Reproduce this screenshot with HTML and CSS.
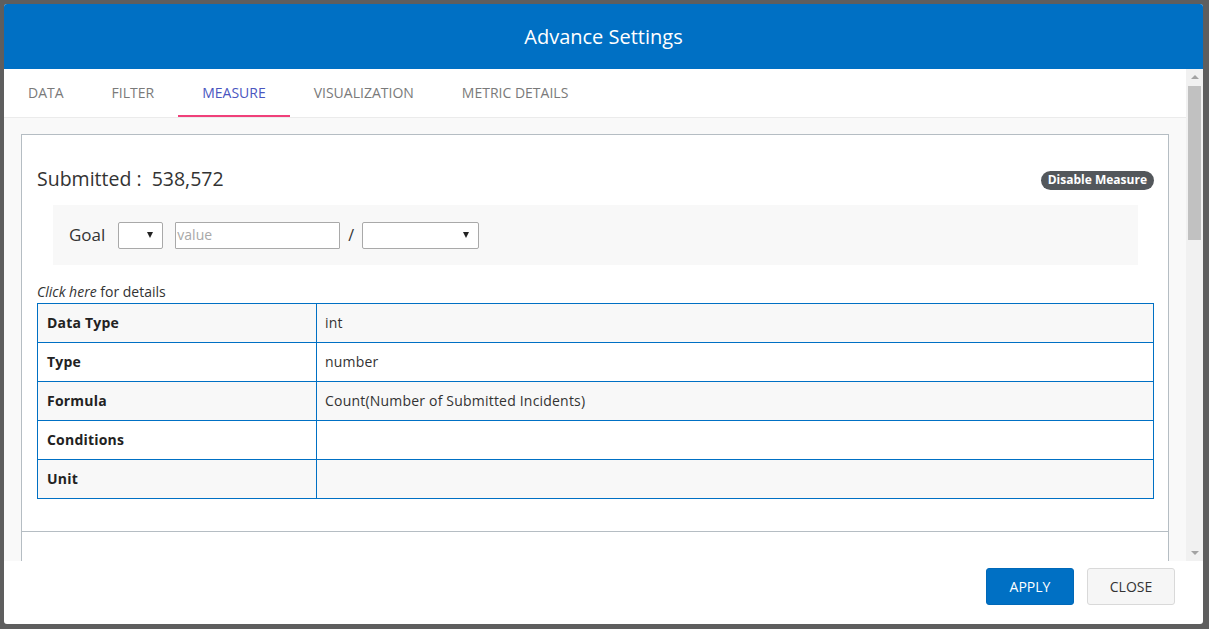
FILE: index.html
```html
<!DOCTYPE html>
<html>
<head>
<meta charset="utf-8">
<link rel="stylesheet" href="styles.css">
</head>
<body>
<div class="modal">
  <div class="modal-header">Advance Settings</div>
  <div class="modal-main">
    <div class="content">
      <div class="tabs">
        <div class="tab">DATA</div>
        <div class="tab">FILTER</div>
        <div class="tab active">MEASURE</div>
        <div class="tab">VISUALIZATION</div>
        <div class="tab">METRIC DETAILS</div>
      </div>
      <div class="tab-pane">
        <div class="panel">
          <div class="panel-body">
            <div class="measure-head">
              <div class="measure-title">Submitted :&nbsp; 538,572</div>
              <span class="badge">Disable Measure</span>
            </div>
            <div class="goal-box">
              <span class="goal-label">Goal</span>
              <div class="select sel-small"><span class="caret"></span></div>
              <input class="goal-input" type="text" placeholder="value">
              <span class="slash">/</span>
              <div class="select sel-wide"><span class="caret"></span></div>
            </div>
            <div class="details-link"><em>Click here</em> for details</div>
            <table class="details">
              <tr class="odd"><th>Data Type</th><td>int</td></tr>
              <tr><th>Type</th><td>number</td></tr>
              <tr class="odd"><th>Formula</th><td>Count(Number of Submitted Incidents)</td></tr>
              <tr><th>Conditions</th><td></td></tr>
              <tr class="odd"><th>Unit</th><td></td></tr>
            </table>
          </div>
          <div class="panel-footer"></div>
        </div>
      </div>
    </div>
    <div class="scrollbar">
      <span class="arrow-up"></span>
      <div class="track"><div class="thumb"></div></div>
      <span class="arrow-down"></span>
    </div>
  </div>
  <div class="modal-footer">
    <button class="btn btn-primary">APPLY</button>
    <button class="btn btn-default">CLOSE</button>
  </div>
</div>
</body>
</html>
```

FILE: styles.css
```css
* { box-sizing: border-box; }

html, body {
  margin: 0;
  height: 629px;
  overflow: hidden;
}

body {
  background: #5e5e5e;
  padding: 4px;
  font-family: "Open Sans", "Noto Sans", sans-serif;
  color: #333;
}

.modal {
  width: 1199px;
  height: 620px;
  background: #fff;
  border-radius: 3px;
  overflow: hidden;
  display: flex;
  flex-direction: column;
}

.modal-header {
  height: 65px;
  flex: none;
  background: #0070c4;
  color: #fff;
  font-size: 20px;
  display: flex;
  align-items: center;
  justify-content: center;
  padding-bottom: 1px;
}

.modal-main {
  height: 492px;
  flex: none;
  display: flex;
}

.content {
  flex: 1;
  overflow: hidden;
  background: #f9f9f9;
}

.tabs {
  height: 49px;
  background: #fff;
  border-bottom: 1px solid #ebebeb;
  display: flex;
}

.tab {
  height: 48px;
  padding: 0 24px;
  display: flex;
  align-items: center;
  font-size: 14px;
  color: #7a7a7a;
  border-bottom: 2px solid transparent;
}

.tab.active {
  color: #4a56bf;
  border-bottom-color: #f0407a;
}

.tab-pane {
  padding: 16px 17px 0 17px;
}

.panel {
  background: #fff;
  border: 1px solid #b5bdc3;
  border-bottom: none;
}

.panel-body {
  padding: 30px 14px 32px 15px;
  border-bottom: 1px solid #b5bdc3;
}

.measure-head {
  height: 28px;
  display: flex;
  align-items: center;
  justify-content: space-between;
}

.measure-title {
  font-size: 19.5px;
  color: #333;
  margin-top: -2px;
}

.badge {
  background: #53575b;
  color: #fff;
  font-size: 12px;
  font-weight: 700;
  border-radius: 10px;
  padding: 1px 7px 2px 7px;
  line-height: 16px;
  margin-top: 3px;
}

.goal-box {
  margin: 12px 16px 0 16px;
  height: 60px;
  background: #f8f8f8;
  display: flex;
  align-items: center;
  padding-left: 16px;
}

.goal-label {
  font-size: 17px;
  color: #333;
  margin-right: 13px;
  margin-top: -2px;
}

.select {
  position: relative;
  height: 27px;
  border: 1px solid #a9a9a9;
  border-radius: 2px;
  background: #fff;
}

.sel-small { width: 45px; margin-right: 12px; }
.sel-wide { width: 117px; }

.caret {
  position: absolute;
  right: 9px;
  top: 9px;
  width: 0;
  height: 0;
  border-left: 3px solid transparent;
  border-right: 3px solid transparent;
  border-top: 6px solid #222;
}

.goal-input {
  width: 165px;
  height: 27px;
  border: 1px solid #a9a9a9;
  border-radius: 1px;
  padding: 0 0 2px 1px;
  font-family: "Open Sans", "Noto Sans", sans-serif;
  font-size: 14px;
  color: #333;
  outline: none;
}

.goal-input::placeholder { color: #a8a8a8; }

.slash {
  font-size: 16px;
  color: #333;
  margin: 0 8px;
}

.details-link {
  margin-top: 18px;
  height: 20px;
  line-height: 18px;
  font-size: 14px;
  color: #333;
}

.details {
  width: 100%;
  border-collapse: collapse;
  border: 1px solid #0070c4;
  font-size: 14px;
  letter-spacing: 0.2px;
}

.details th, .details td {
  border: 1px solid #0070c4;
  height: 39px;
  padding: 0 0 1px 9px;
  text-align: left;
  vertical-align: middle;
}

.details th {
  width: 279px;
  font-weight: 700;
  color: #222;
}

.details td {
  color: #333;
  padding-left: 8px;
}

.details tr.odd { background: #f8f8f8; }

.panel-footer {
  height: 60px;
}

.scrollbar {
  width: 17px;
  flex: none;
  background: #f1f1f1;
  display: flex;
  flex-direction: column;
  align-items: center;
}

.arrow-up, .arrow-down {
  flex: none;
  width: 0;
  height: 0;
  border-left: 4px solid transparent;
  border-right: 4px solid transparent;
}

.arrow-up {
  border-bottom: 4px solid #a3a3a3;
  margin: 6px 0 7px 0;
}

.arrow-down {
  border-top: 4px solid #a3a3a3;
  margin: 7px 0 6px 0;
}

.track {
  flex: 1;
  width: 100%;
  padding: 0 2px;
}

.thumb {
  height: 154px;
  background: #c1c1c1;
}

.modal-footer {
  height: 63px;
  flex: none;
  display: flex;
  justify-content: flex-end;
  align-items: flex-start;
  gap: 13px;
  padding: 7px 28px 0 0;
}

.btn {
  width: 88px;
  height: 37px;
  border-radius: 3px;
  font-family: "Open Sans", "Noto Sans", sans-serif;
  font-size: 14px;
  cursor: pointer;
}

.btn-primary {
  background: #0070c4;
  border: 1px solid #0068b8;
  color: #fff;
}

.btn-default {
  background: #f6f6f6;
  border: 1px solid #d9d9d9;
  color: #333;
}
```
